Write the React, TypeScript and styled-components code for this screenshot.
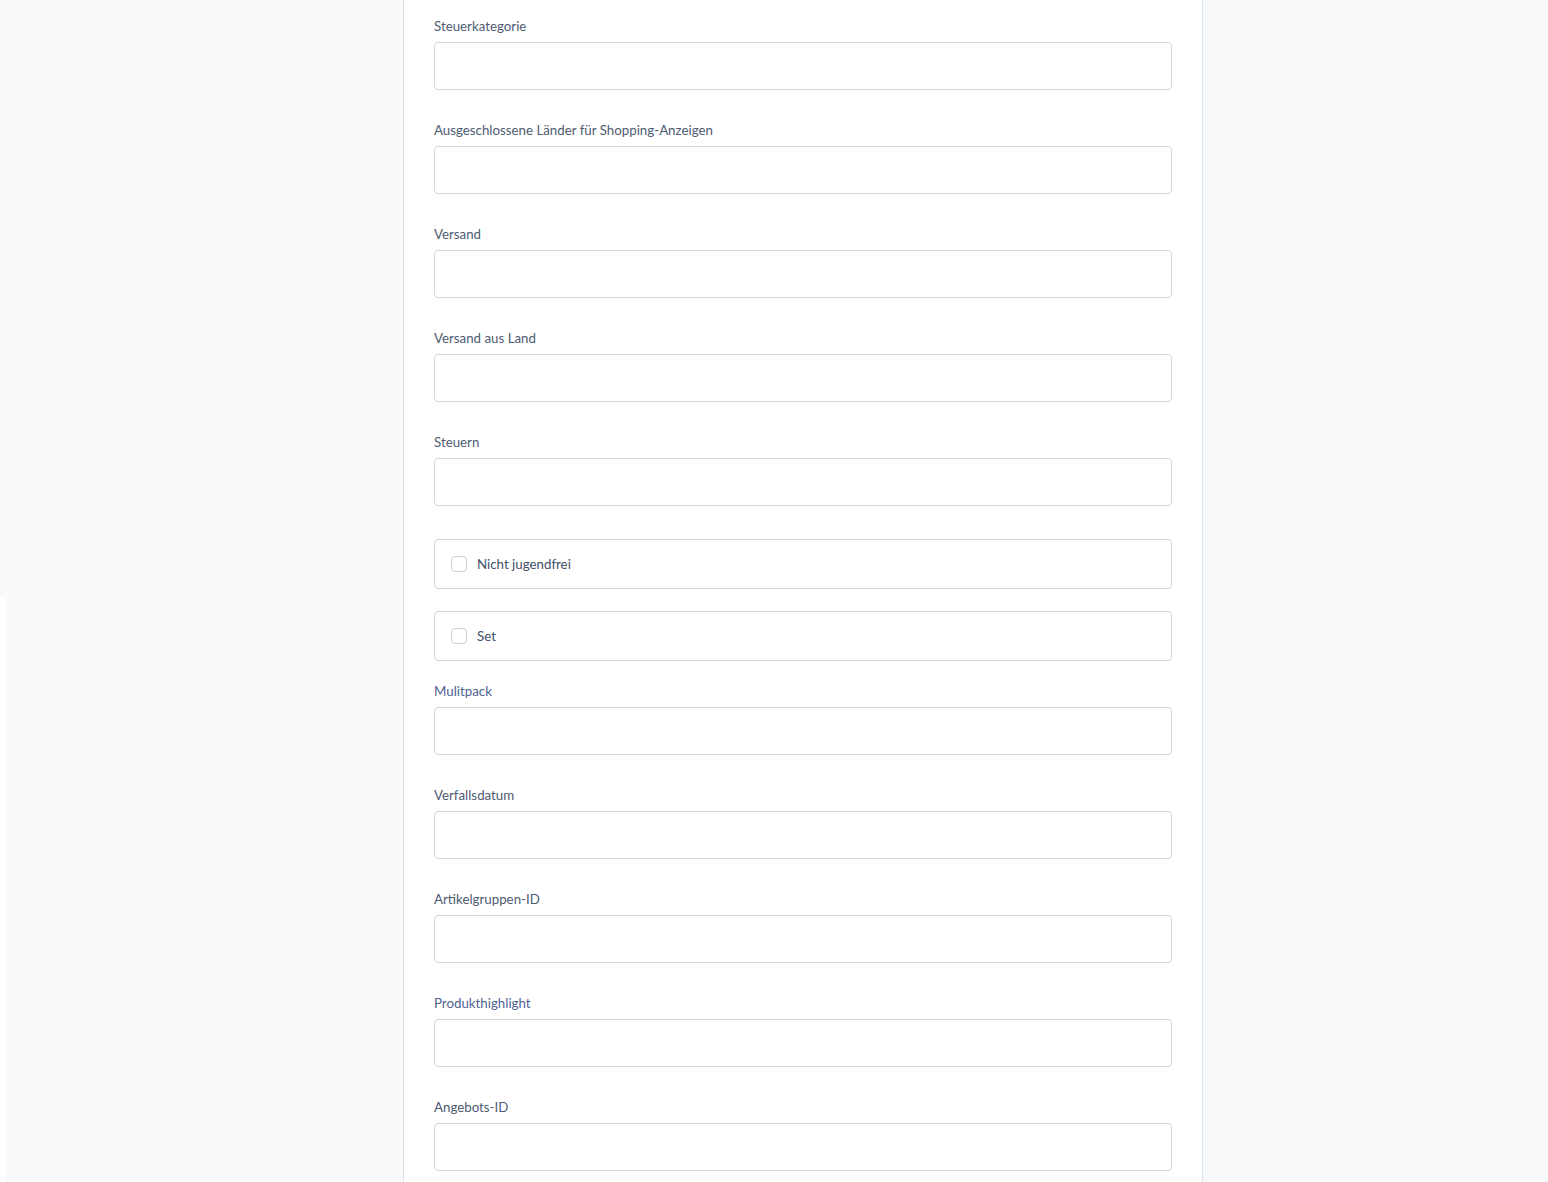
import React, { FC } from 'react';
import styled, { createGlobalStyle } from 'styled-components';

const GlobalStyle = createGlobalStyle`
  html, body {
    margin: 0;
    padding: 0;
    background: #f8f9fb;
    font-family: Lato, "Noto Sans", sans-serif;
  }
`;

const Page = styled.div`
  min-height: 1182px;
  display: flex;
  padding-left: 403px;
`;

const SidebarEdge = styled.div`
  position: fixed;
  left: 0;
  top: 597px;
  bottom: 0;
  width: 6px;
  background: #ffffff;
`;

const Panel = styled.main`
  width: 738px;
  padding: 17px 30px 0;
  background: #ffffff;
  border-left: 1px solid #dde3ea;
  border-right: 1px solid #dde3ea;
`;

const Field = styled.div`
  display: flex;
  flex-direction: column;
  margin-bottom: 31px;
`;

const Label = styled.label<{ accent?: boolean }>`
  font-size: 13.3px;
  line-height: 18px;
  color: ${({ accent }) => (accent ? '#4d6391' : '#4e5b72')};
  margin-bottom: 7px;
`;

const Input = styled.input`
  box-sizing: border-box;
  height: 48px;
  width: 100%;
  border: 1px solid #cfd7e2;
  border-radius: 4px;
  background: #ffffff;
  padding: 0 14px;
  font: inherit;
  font-size: 13px;
  outline: none;
`;

const CheckList = styled.div`
  display: flex;
  flex-direction: column;
  gap: 22px;
  margin: 33px 0 21px;
`;

const CheckRow = styled.label`
  box-sizing: border-box;
  height: 50px;
  display: flex;
  align-items: center;
  gap: 10px;
  padding: 0 16px;
  border: 1px solid #cfd7e2;
  border-radius: 4px;
  font-size: 13.3px;
  color: #425069;
  cursor: pointer;
`;

const Box = styled.span`
  box-sizing: border-box;
  width: 16px;
  height: 16px;
  border: 1px solid #c8d2de;
  border-radius: 4px;
  background: #ffffff;
  flex-shrink: 0;
`;

type FieldDef = { label: string; accent?: boolean };

const topFields: FieldDef[] = [
  { label: 'Steuerkategorie' },
  { label: 'Ausgeschlossene Länder für Shopping-Anzeigen' },
  { label: 'Versand' },
  { label: 'Versand aus Land' },
  { label: 'Steuern' },
];

const flags = ['Nicht jugendfrei', 'Set'];

const bottomFields: FieldDef[] = [
  { label: 'Mulitpack', accent: true },
  { label: 'Verfallsdatum' },
  { label: 'Artikelgruppen-ID' },
  { label: 'Produkthighlight', accent: true },
  { label: 'Angebots-ID' },
];

const TextField: FC<FieldDef> = ({ label, accent }) => (
  <Field>
    <Label accent={accent}>{label}</Label>
    <Input type="text" />
  </Field>
);

const App: FC = () => (
  <>
    <GlobalStyle />
    <SidebarEdge />
    <Page>
      <Panel>
        {topFields.map((f) => (
          <TextField key={f.label} {...f} />
        ))}
        <CheckList>
          {flags.map((name) => (
            <CheckRow key={name}>
              <Box />
              {name}
            </CheckRow>
          ))}
        </CheckList>
        {bottomFields.map((f) => (
          <TextField key={f.label} {...f} />
        ))}
      </Panel>
    </Page>
  </>
);

export default App;
